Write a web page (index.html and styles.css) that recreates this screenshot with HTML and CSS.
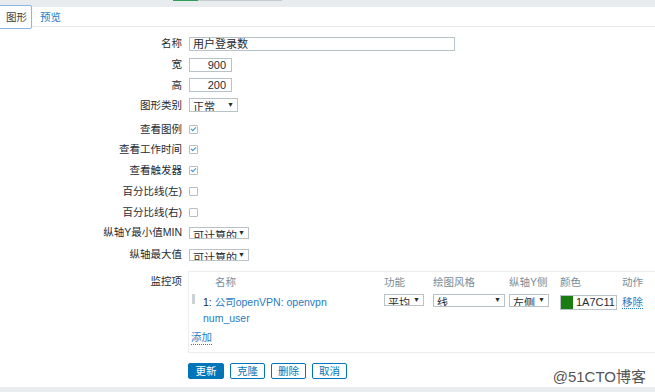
FILE: index.html
```
<!DOCTYPE html>
<html lang="zh">
<head>
<meta charset="utf-8">
<link rel="stylesheet" href="styles.css">
</head>
<body>
<div class="topbar">
  <div class="progress"><span class="pg-green"></span><span class="pg-rest"></span></div>
</div>
<div class="tabs">
  <span class="tab active">图形</span>
  <a class="tab link">预览</a>
</div>
<div class="form">
  <div class="row r-name"><label>名称</label><div class="field"><span class="input wide">用户登录数</span></div></div>
  <div class="row r-w"><label>宽</label><div class="field"><span class="input num">900</span></div></div>
  <div class="row r-h"><label>高</label><div class="field"><span class="input num">200</span></div></div>
  <div class="row r-type"><label>图形类别</label><div class="field"><span class="sel s-type"><span class="sel-text">正常</span><span class="arrow">▼</span></span></div></div>
  <div class="row r-cb1"><label>查看图例</label><div class="field"><span class="cb checked"></span></div></div>
  <div class="row r-cb"><label>查看工作时间</label><div class="field"><span class="cb checked"></span></div></div>
  <div class="row r-cb"><label>查看触发器</label><div class="field"><span class="cb checked"></span></div></div>
  <div class="row r-cb"><label>百分比线(左)</label><div class="field"><span class="cb"></span></div></div>
  <div class="row r-cb2"><label>百分比线(右)</label><div class="field"><span class="cb"></span></div></div>
  <div class="row r-min"><label>纵轴Y最小值MIN</label><div class="field"><span class="sel s-calc"><span class="sel-text">可计算的</span><span class="arrow">▼</span></span></div></div>
  <div class="row r-max"><label>纵轴最大值</label><div class="field"><span class="sel s-calc"><span class="sel-text">可计算的</span><span class="arrow">▼</span></span></div></div>
  <div class="row r-items">
    <label class="top">监控项</label>
    <div class="items">
      <div class="grid">
        <div class="th"></div>
        <div class="th th-name">名称</div>
        <div class="th">功能</div>
        <div class="th">绘图风格</div>
        <div class="th">纵轴Y侧</div>
        <div class="th">颜色</div>
        <div class="th">动作</div>

        <div class="td"><span class="handle"></span></div>
        <div class="td td-name">1: <a class="link">公司openVPN: openvpn<br>num_user</a></div>
        <div class="td"><span class="sel s-func"><span class="sel-text">平均</span><span class="arrow">▼</span></span></div>
        <div class="td"><span class="sel s-style"><span class="sel-text">线</span><span class="arrow">▼</span></span></div>
        <div class="td"><span class="sel s-side"><span class="sel-text">左侧</span><span class="arrow">▼</span></span></div>
        <div class="td"><span class="color"><span class="swatch"></span><span class="hex">1A7C11</span></span></div>
        <div class="td"><a class="link dotted">移除</a></div>
      </div>
      <a class="link dotted add">添加</a>
    </div>
  </div>
  <div class="buttons">
    <span class="btn primary">更新</span>
    <span class="btn">克隆</span>
    <span class="btn">删除</span>
    <span class="btn">取消</span>
  </div>
</div>
<div class="watermark">@51CTO博客</div>
<div class="footer"></div>
</body>
</html>
```
FILE: styles.css
```
* { box-sizing: border-box; }
html, body { margin: 0; padding: 0; }
body {
  width: 655px;
  height: 392px;
  overflow: hidden;
  background: #fff;
  font-family: "Liberation Sans", "Noto Sans CJK SC", sans-serif;
  font-size: 10.5px;
  color: #1f2c33;
  position: relative;
}
.topbar {
  height: 7px;
  background: #e9ecee;
}
.progress { display: flex; padding-left: 173px; }
.pg-green { display: block; width: 25px; height: 1px; background: #2e9e58; }
.pg-rest { display: block; width: 84px; height: 1px; background: #c4ccd0; }

.tabs {
  height: 20px;
  border-bottom: 1px solid #e6e9eb;
  display: flex;
  align-items: center;
}
.tab {
  display: block;
  line-height: 14px;
}
.tab.active {
  margin-left: -2px;
  margin-top: -2px;
  height: 24px;
  padding: 4px 4px 0 7px;
  border: 1px solid #8fb6e8;
  border-radius: 2px;
  box-shadow: 0 0 1px #b9d3f3;
  color: #3a3f44;
  background: #fff;
  align-self: flex-start;
}
.tab.link { margin-left: 8px; }
.link { color: #1f7bc4; text-decoration: none; }

.form { padding-top: 6px; }
.row {
  display: grid;
  grid-template-columns: 182px 1fr;
  column-gap: 7px;
  align-items: center;
  height: 21px;
}
.row label { text-align: right; white-space: nowrap; line-height: 13px; }
.r-h { height: 20px; }
.r-type { height: 20px; }
.r-cb1 { margin-top: 4px; height: 20px; }
.r-cb2 { height: 20px; }
.r-max { height: 23px; }
.field { display: flex; align-items: center; }

.input {
  display: block;
  height: 14px;
  border: 1px solid #b8c2c7;
  line-height: 12px;
  padding: 0 3px;
  font-size: 11px;
  color: #1f2c33;
  background: #fff;
}
.input.wide { width: 266px; }
.input.num { width: 43px; text-align: right; padding-right: 5px; }

.sel {
  position: relative;
  display: block;
  height: 14px;
  border: 1px solid #b8c2c7;
  overflow: hidden;
  background: #fff;
}
.sel-text {
  display: block;
  padding: 2px 0 0 3px;
  font-size: 11px;
  line-height: 13px;
  color: #1f2c33;
  white-space: nowrap;
}
.arrow {
  position: absolute;
  right: 0;
  top: 0;
  bottom: 0;
  width: 10px;
  padding-top: 1px;
  font-size: 7px;
  line-height: 10px;
  color: #1f2c33;
  background: #fff;
}
.s-type { width: 49px; }
.s-calc { width: 60px; height: 12px; }
.s-calc .sel-text { padding-top: 2px; }
.s-calc .arrow { padding-top: 0; }

.cb {
  display: block;
  width: 9px;
  height: 9px;
  border: 1px solid #b4c0c6;
  border-radius: 1px;
  position: relative;
  background: #fff;
}
.cb.checked::after {
  content: "";
  position: absolute;
  left: 2px;
  top: 0px;
  width: 2px;
  height: 4px;
  border: solid #3d8ed6;
  border-width: 0 1px 1px 0;
  transform: rotate(45deg);
}

.r-items {
  height: auto;
  align-items: start;
  margin-top: 5px;
}
.r-items label.top { padding-top: 4px; }
.items {
  border: 1px solid #ebeef0;
  border-right: none;
  margin-left: -1px;
  padding-bottom: 7px;
}
.grid {
  display: grid;
  grid-template-columns: 14px 181px 49px 76px 51px 62px 1fr;
}
.th {
  color: #768d99;
  padding-top: 3px;
  line-height: 14px;
  height: 18px;
  white-space: nowrap;
}
.th-name { padding-left: 12px; }
.td { padding-top: 4px; line-height: 16px; white-space: nowrap; }
.td-name { color: #1f2c33; }
.handle {
  display: block;
  margin: 0 0 0 3px;
  width: 3px;
  height: 10px;
  background-image: radial-gradient(circle, #b9c3c8 0.6px, transparent 0.7px);
  background-size: 1.5px 2px;
}
.s-func { width: 40px; height: 12px; }
.s-style { width: 72px; height: 13px; }
.s-side { width: 40px; height: 13px; }
.s-func .sel-text, .s-style .sel-text, .s-side .sel-text { padding-top: 2px; }
.s-func .arrow, .s-style .arrow, .s-side .arrow { padding-top: 0; }
.color {
  display: flex;
  width: 57px;
  height: 15px;
  margin-top: 1px;
  border: 1px solid #b8c2c7;
  align-items: center;
}
.swatch { display: block; width: 12px; height: 13px; background: #1a7c11; }
.hex { padding-left: 3px; font-size: 11px; color: #1f2c33; line-height: 13px; }
.dotted { border-bottom: 1px dotted #1f7bc4; }
.add {
  display: inline-block;
  margin: 5px 0 0 2px;
  line-height: 13px;
}

.buttons {
  display: flex;
  gap: 6px;
  padding-left: 188px;
  margin-top: 10px;
}
.btn {
  display: block;
  width: 35px;
  height: 16px;
  border: 1px solid #0275b8;
  border-radius: 2px;
  color: #0275b8;
  text-align: center;
  line-height: 14px;
  background: #fff;
}
.btn.primary { background: #0275b8; color: #fff; width: 36px; }

.watermark {
  position: absolute;
  right: 9px;
  top: 368px;
  font-size: 15px;
  color: #555;
  line-height: 18px;
  font-family: "Liberation Sans", "Noto Sans CJK SC", sans-serif;
}
.footer {
  position: absolute;
  left: 0;
  right: 0;
  bottom: 0;
  height: 5px;
  background: #e9ecee;
}
```
